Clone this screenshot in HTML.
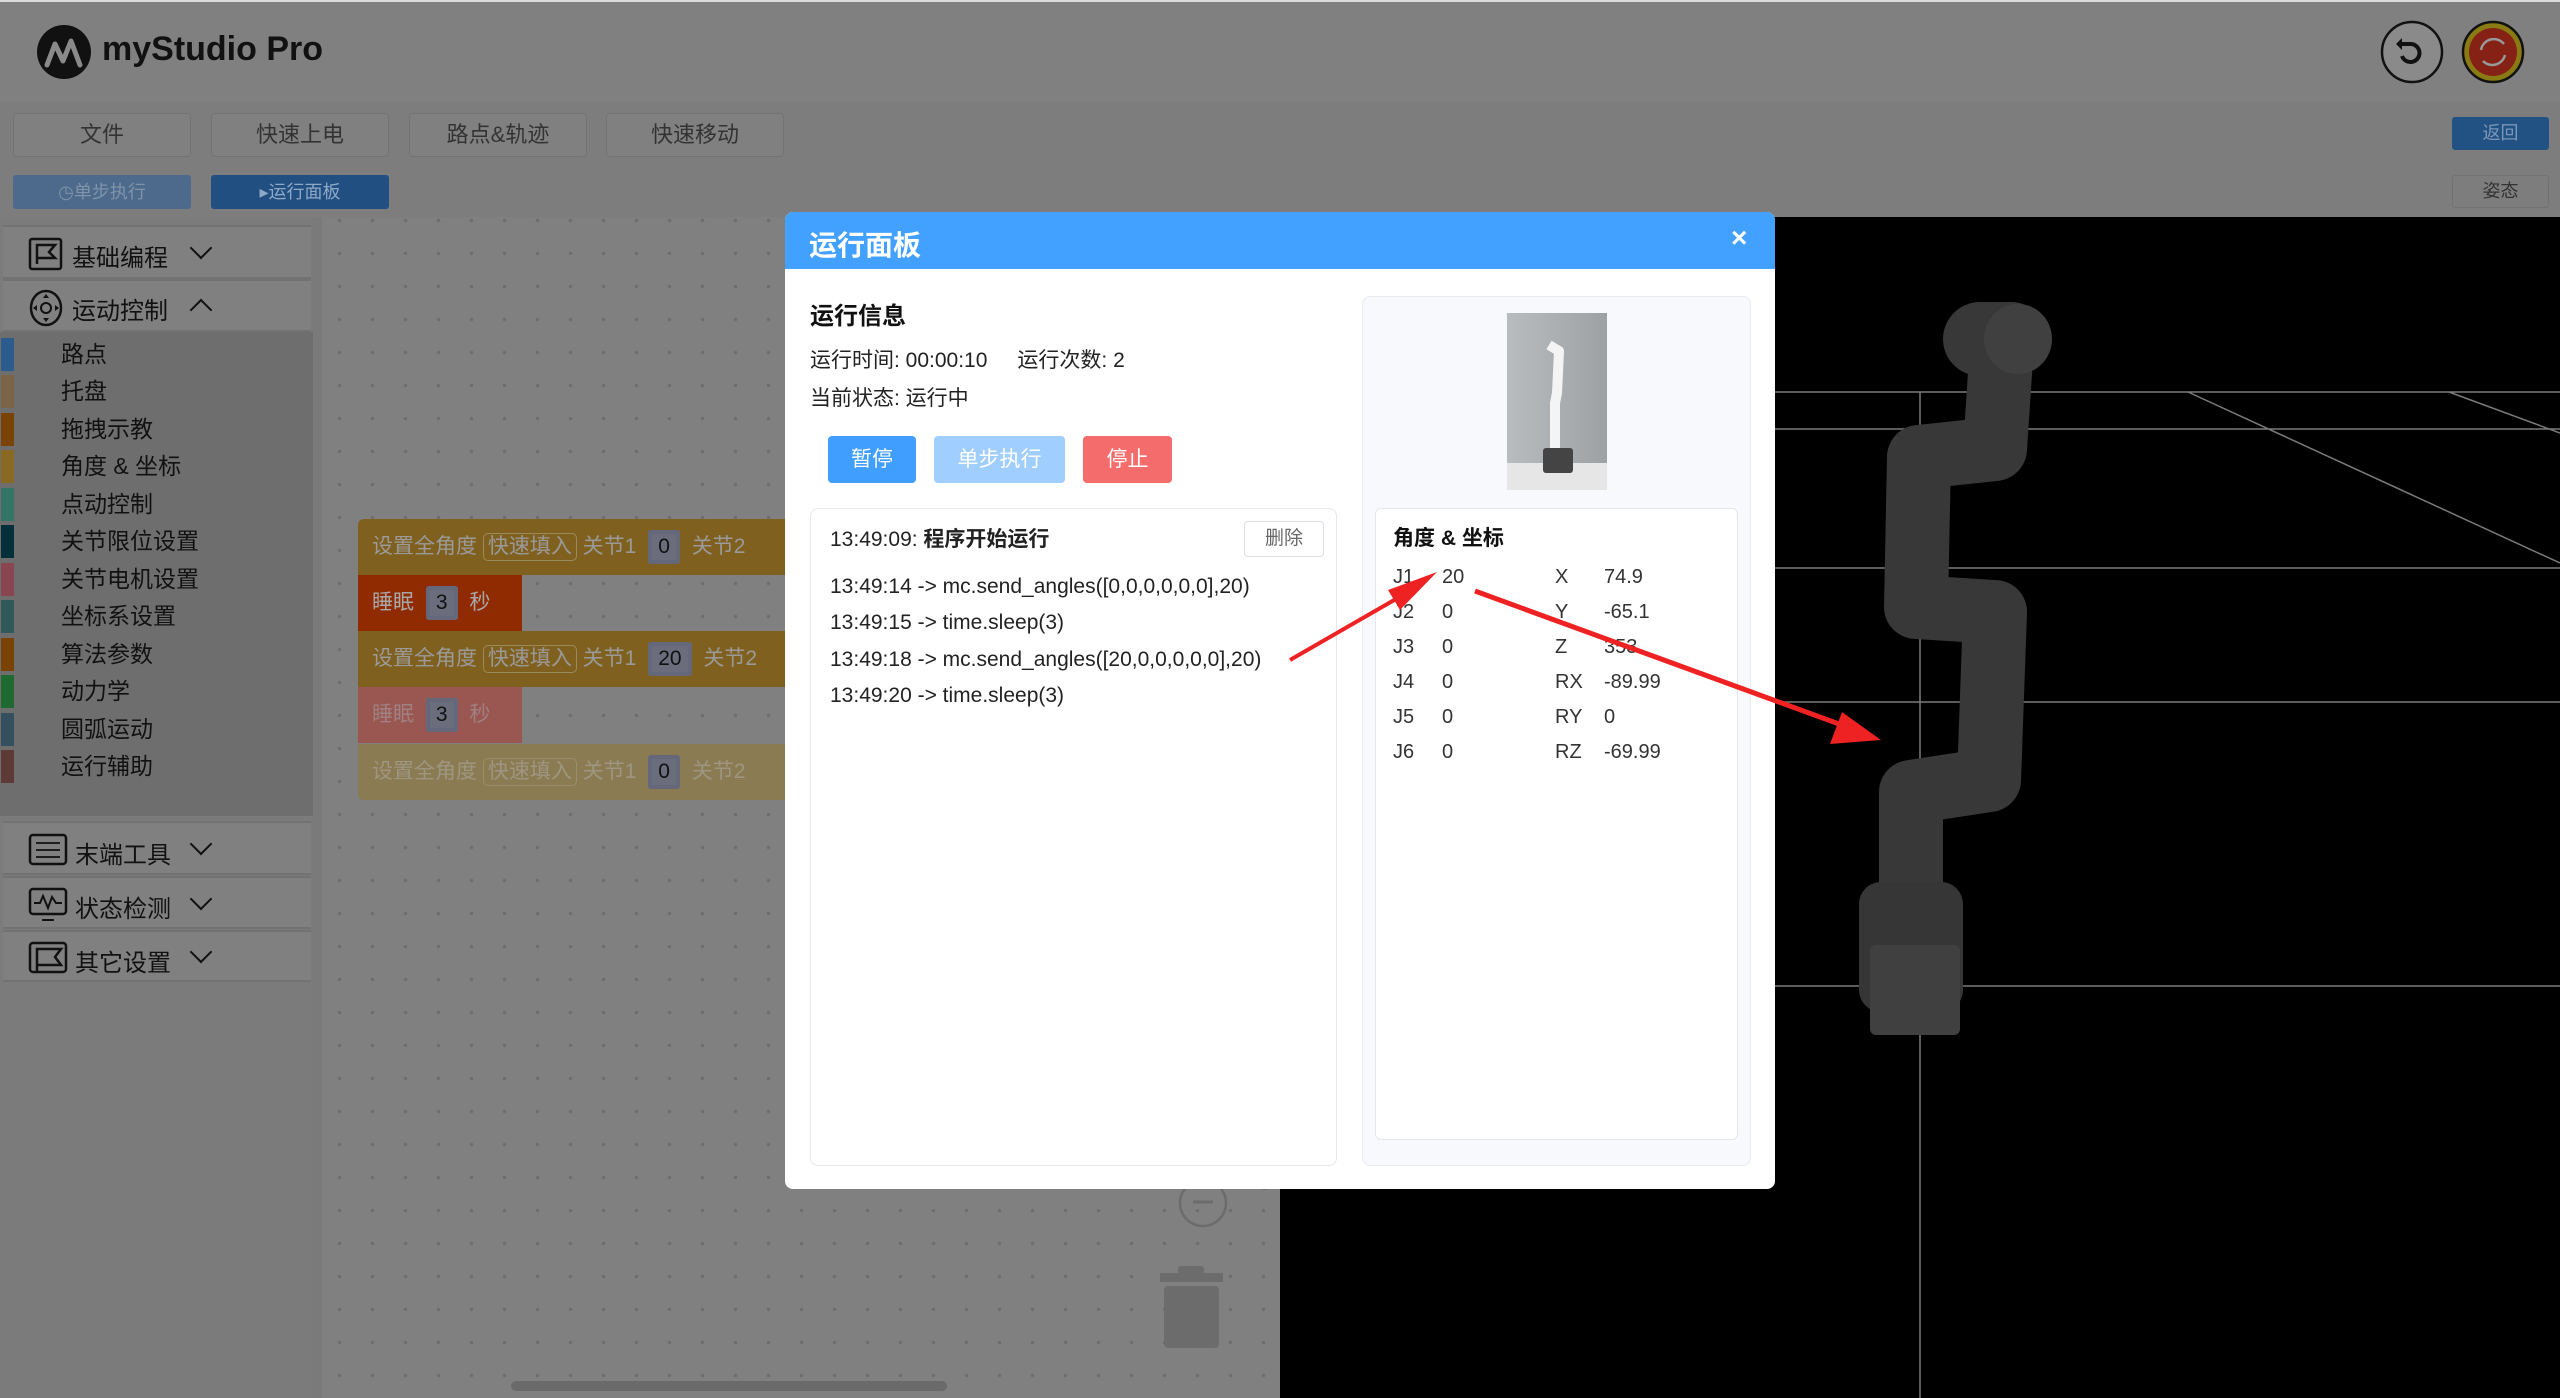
<!DOCTYPE html>
<html><head><meta charset="utf-8"><style>
*{margin:0;padding:0;box-sizing:border-box}
body{width:2560px;height:1398px;overflow:hidden;background:#808080;font-family:"Liberation Sans","Noto Sans CJK SC",sans-serif;position:relative}
.a{position:absolute}
.tb{position:absolute;border:1px solid #737373;border-radius:4px;background:#808080;color:#333;font-size:22px;text-align:center;line-height:42px;height:44px;width:178px;top:113px}
.cat{position:absolute;left:3px;width:308px;background:#808080;border-top:2px solid #727272;border-bottom:2px solid #727272;color:#111;font-size:24px}
.sub{position:absolute;left:0;width:313px;height:37px}
.sub i{position:absolute;left:1px;top:2px;width:13px;height:33px}
.sub span{position:absolute;left:61px;top:0;font-size:23px;color:#111;line-height:37px}
.blk{position:absolute;height:56px;font-size:21px;line-height:56px;padding-left:14px;white-space:nowrap;overflow:hidden}
.num{display:inline-block;background:#6b6d7d;color:#111;padding:0 10px;line-height:34px;border-radius:3px;margin:0 6px;box-shadow:inset 0 0 0 4px #65677a}
.log{position:absolute;left:830px;font-size:21px;color:#222}
.rv{position:absolute;font-size:20px;color:#333}
.chev{position:absolute;width:16px;height:16px;border-right:2.5px solid #111;border-bottom:2.5px solid #111;transform:rotate(45deg)}
</style></head><body>
<!-- header -->
<div class="a" style="left:0;top:0;width:2560px;height:103px;background:#808080"></div>
<div class="a" style="left:0;top:0;width:2560px;height:2px;background:#dcdcdc"></div>
<svg class="a" style="left:36px;top:24px" width="56" height="56" viewBox="0 0 56 56"><circle cx="28" cy="28" r="27" fill="#111"/><path d="M11 41 L19 20 L27 37 L35 17 L44 41" stroke="#8a8a8a" stroke-width="5" fill="none" stroke-linejoin="round" stroke-linecap="round"/></svg>
<div class="a" style="left:102px;top:30px;font-size:34px;font-weight:bold;color:#111">myStudio Pro</div>
<div class="a" style="left:0;top:103px;width:2560px;height:114px;background:#7d7d7d"></div>
<div class="tb" style="left:13px">文件</div>
<div class="tb" style="left:211px">快速上电</div>
<div class="tb" style="left:409px">路点&amp;轨迹</div>
<div class="tb" style="left:606px">快速移动</div>
<div class="a" style="left:13px;top:175px;width:178px;height:34px;background:#4d6a8c;border-radius:3px;color:#7f93aa;font-size:18px;text-align:center;line-height:34px">◷单步执行</div>
<div class="a" style="left:211px;top:175px;width:178px;height:34px;background:#214f82;border-radius:3px;color:#8ea8c6;font-size:18px;text-align:center;line-height:34px">▸运行面板</div>
<svg class="a" style="left:2378px;top:18px" width="150" height="70"><circle cx="34" cy="34" r="30" fill="#8a8a8a" stroke="#111" stroke-width="2.5"/><path d="M24 26 L33 26 A9 9 0 1 1 24 38" stroke="#111" stroke-width="4" fill="none"/><path d="M24 20 L24 32 L18 26Z" fill="#111"/><circle cx="115" cy="34" r="30" fill="#8a7a14" stroke="#111" stroke-width="2.5"/><circle cx="115" cy="34" r="24" fill="#852215"/><path d="M103 32 A13 13 0 0 1 126 26 M127 37 A13 13 0 0 1 105 43" stroke="#999" stroke-width="2.5" fill="none"/></svg>
<div class="a" style="left:2452px;top:117px;width:97px;height:33px;background:#215283;border-radius:3px;color:#7a97b8;font-size:18px;text-align:center;line-height:33px">返回</div>
<div class="a" style="left:2452px;top:175px;width:97px;height:33px;border:1px solid #727272;border-radius:3px;color:#333;font-size:18px;text-align:center;line-height:31px">姿态</div>
<!-- canvas -->
<div class="a" style="left:313px;top:217px;width:970px;height:1181px;background-color:#808080;background-image:radial-gradient(circle,#6e6e6e 1.5px,transparent 2px);background-size:33px 33px;background-position:10px 20px"></div>
<div class="a" style="left:313px;top:217px;width:9px;height:1181px;background:#7a7a7a"></div>
<!-- sidebar -->
<div class="a" style="left:0;top:217px;width:313px;height:1181px;background:#7b7b7b"></div>
<div class="cat" style="top:225px;height:54px"><svg class="a" style="left:25px;top:10px" width="36" height="34"><rect x="2" y="2" width="31" height="30" rx="2" fill="none" stroke="#111" stroke-width="2.5"/><path d="M9 27 V8 H27 L21 15 L27 21 H9" fill="none" stroke="#111" stroke-width="2.5"/></svg><span class="a" style="left:69px;top:11px">基础编程</span><div class="chev" style="left:190px;top:13px"></div></div>
<div class="cat" style="top:279px;height:53px"><svg class="a" style="left:25px;top:8px" width="36" height="38"><ellipse cx="18" cy="19" rx="15" ry="17" fill="none" stroke="#111" stroke-width="2.5"/><circle cx="18" cy="19" r="5" fill="none" stroke="#111" stroke-width="2"/><path d="M18 5 L15 9 H21Z M18 33 L15 29 H21Z M5 19 L9 16 V22Z M31 19 L27 16 V22Z" fill="#111"/></svg><span class="a" style="left:69px;top:10px">运动控制</span><div class="chev" style="left:190px;top:21px;transform:rotate(225deg)"></div></div>
<div class="a" style="left:0;top:332px;width:313px;height:484px;background:#6e6e6e"></div>
<div class="sub" style="top:336px"><i style="background:#2c5c8d"></i><span>路点</span></div>
<div class="sub" style="top:373px"><i style="background:#7b6546"></i><span>托盘</span></div>
<div class="sub" style="top:411px"><i style="background:#7a4304"></i><span>拖拽示教</span></div>
<div class="sub" style="top:448px"><i style="background:#8a6a23"></i><span>角度 &amp; 坐标</span></div>
<div class="sub" style="top:486px"><i style="background:#347568"></i><span>点动控制</span></div>
<div class="sub" style="top:523px"><i style="background:#04303c"></i><span>关节限位设置</span></div>
<div class="sub" style="top:561px"><i style="background:#8a4650"></i><span>关节电机设置</span></div>
<div class="sub" style="top:598px"><i style="background:#305a5a"></i><span>坐标系设置</span></div>
<div class="sub" style="top:636px"><i style="background:#7a4304"></i><span>算法参数</span></div>
<div class="sub" style="top:673px"><i style="background:#1e6a30"></i><span>动力学</span></div>
<div class="sub" style="top:711px"><i style="background:#34505e"></i><span>圆弧运动</span></div>
<div class="sub" style="top:748px"><i style="background:#5d3a36"></i><span>运行辅助</span></div>
<div class="cat" style="top:821px;height:54px"><svg class="a" style="left:25px;top:10px" width="40" height="34"><rect x="2" y="2" width="36" height="29" rx="3" fill="none" stroke="#111" stroke-width="2.5"/><path d="M8 10H32M8 17H32M8 24H32" stroke="#111" stroke-width="1.8"/></svg><span class="a" style="left:72px;top:12px">末端工具</span><div class="chev" style="left:190px;top:13px"></div></div>
<div class="cat" style="top:876px;height:53px"><svg class="a" style="left:25px;top:9px" width="40" height="36"><rect x="2" y="2" width="36" height="25" rx="3" fill="none" stroke="#111" stroke-width="2.5"/><path d="M6 16 L12 16 L15 9 L20 21 L24 10 L28 16 L34 16 M14 33H26" stroke="#111" stroke-width="2" fill="none"/></svg><span class="a" style="left:72px;top:11px">状态检测</span><div class="chev" style="left:190px;top:13px"></div></div>
<div class="cat" style="top:930px;height:52px"><svg class="a" style="left:25px;top:9px" width="40" height="34"><rect x="2" y="2" width="36" height="29" rx="3" fill="none" stroke="#111" stroke-width="2.5"/><path d="M9 30 V8 H33 L27 16 L33 24 H9" fill="none" stroke="#111" stroke-width="2.5"/></svg><span class="a" style="left:72px;top:11px">其它设置</span><div class="chev" style="left:190px;top:12px"></div></div>
<!-- blocks -->
<div class="blk" style="left:358px;top:519px;width:500px;background:#80601f;color:#9a9a9a;border-radius:6px 0 0 0">设置全角度 <span style="border:1px solid #9a8a5a;border-radius:5px;padding:0 4px;line-height:26px;display:inline-block">快速填入</span> 关节1 <span class="num">0</span> 关节2</div>
<div class="blk" style="left:358px;top:575px;width:164px;background:#902a00;color:#a8a8a8">睡眠 <span class="num">3</span> 秒</div>
<div class="blk" style="left:358px;top:631px;width:500px;background:#80601f;color:#9a9a9a">设置全角度 <span style="border:1px solid #9a8a5a;border-radius:5px;padding:0 4px;line-height:26px;display:inline-block">快速填入</span> 关节1 <span class="num">20</span> 关节2</div>
<div class="blk" style="left:358px;top:687px;width:164px;background:#9a5650;color:#a08080">睡眠 <span class="num">3</span> 秒</div>
<div class="blk" style="left:358px;top:744px;width:500px;background:#8a7b52;color:#9f9682;border-radius:0 0 0 6px">设置全角度 <span style="border:1px solid #9a8e6c;border-radius:5px;padding:0 4px;line-height:26px;display:inline-block">快速填入</span> 关节1 <span class="num">0</span> 关节2</div>
<!-- canvas controls -->
<svg class="a" style="left:1160px;top:1170px" width="110" height="180"><circle cx="43" cy="33" r="23" fill="none" stroke="#6c6c6c" stroke-width="2.5"/><path d="M33 32H53" stroke="#6c6c6c" stroke-width="3"/><rect x="100" y="0" width="10" height="20" rx="5" fill="#6a6a6a"/><rect x="0" y="103" width="63" height="9" fill="#6c6c6c"/><rect x="18" y="96" width="26" height="8" rx="3" fill="#6c6c6c"/><rect x="4" y="116" width="55" height="62" rx="4" fill="#6c6c6c"/></svg>
<div class="a" style="left:511px;top:1381px;width:436px;height:10px;border-radius:5px;background:#6a6a6a"></div>
<!-- 3D view -->
<svg class="a" style="left:1280px;top:217px" width="1280" height="1181" viewBox="1280 217 1280 1181">
<rect x="1280" y="217" width="1280" height="1181" fill="#000"/>
<g stroke="#7a7a7a" stroke-width="1.5" fill="none">
<path d="M1280 392H2560M1280 429H2560M1280 568H2560M1280 702H2560M1280 986H2560M1920 392V1398M2188 392L2560 563M2449 392L2560 433"/>
</g>
<polyline points="2002,343 1995,449 1919,457 1916,607 1995,612 1989,780 1911,792 1911,915" fill="none" stroke="#383838" stroke-width="64" stroke-linejoin="round" stroke-linecap="round"/>
<rect x="1943" y="302" width="105" height="74" rx="37" fill="#383838"/>
<ellipse cx="2018" cy="339" rx="34" ry="35" fill="#404040"/>
<rect x="1859" y="882" width="104" height="130" rx="22" fill="#363636"/>
<rect x="1870" y="945" width="90" height="90" rx="6" fill="#404040"/>
</svg>
<!-- modal -->
<div class="a" style="left:785px;top:212px;width:990px;height:977px;background:#fff;border-radius:8px;overflow:hidden">
<div class="a" style="left:0;top:0;width:990px;height:57px;background:#42a0ff"></div>
<div class="a" style="left:24px;top:12px;font-size:28px;font-weight:bold;color:#fff">运行面板</div>
<div class="a" style="left:946px;top:10px;font-size:28px;font-weight:bold;color:#fff">×</div>
</div>
<div class="a" style="left:810px;top:296px;font-size:24px;font-weight:bold;color:#111">运行信息</div>
<div class="a" style="left:810px;top:344px;font-size:21px;color:#222">运行时间: 00:00:10<span style="margin-left:30px">运行次数: 2</span></div>
<div class="a" style="left:810px;top:382px;font-size:21px;color:#222">当前状态: 运行中</div>
<div class="a" style="left:828px;top:436px;width:88px;height:47px;background:#409eff;border-radius:4px;color:#fff;font-size:21px;text-align:center;line-height:47px">暂停</div>
<div class="a" style="left:934px;top:436px;width:131px;height:47px;background:#a0cfff;border-radius:4px;color:#fff;font-size:21px;text-align:center;line-height:47px">单步执行</div>
<div class="a" style="left:1083px;top:436px;width:89px;height:47px;background:#f56c6c;border-radius:4px;color:#fff;font-size:21px;text-align:center;line-height:47px">停止</div>
<div class="a" style="left:810px;top:508px;width:527px;height:658px;border:1px solid #e4e7ed;border-radius:8px"></div>
<div class="log" style="top:523px">13:49:09:  <b>程序开始运行</b></div>
<div class="a" style="left:1244px;top:521px;width:80px;height:36px;border:1px solid #dcdfe6;border-radius:4px;color:#666;font-size:19px;text-align:center;line-height:34px">删除</div>
<div class="log" style="top:575px">13:49:14 -&gt; mc.send_angles([0,0,0,0,0,0],20)</div>
<div class="log" style="top:611px">13:49:15 -&gt; time.sleep(3)</div>
<div class="log" style="top:648px">13:49:18 -&gt; mc.send_angles([20,0,0,0,0,0],20)</div>
<div class="log" style="top:684px">13:49:20 -&gt; time.sleep(3)</div>
<div class="a" style="left:1362px;top:296px;width:389px;height:870px;background:#f7f9fc;border:1px solid #e8ebf0;border-radius:8px"></div>
<svg class="a" style="left:1507px;top:313px" width="100" height="177"><defs><linearGradient id="g" x1="0" x2="1"><stop offset="0" stop-color="#b9bcbf"/><stop offset="1" stop-color="#9ea1a4"/></linearGradient></defs><rect width="100" height="177" fill="url(#g)"/><rect y="150" width="100" height="27" fill="#e6e6e6"/><polyline points="42,32 52,38 50,80 48,90 48,140" fill="none" stroke="#f4f4f4" stroke-width="10" stroke-linejoin="round"/><rect x="36" y="135" width="30" height="25" rx="3" fill="#444"/></svg>
<div class="a" style="left:1375px;top:508px;width:363px;height:632px;background:#fff;border:1px solid #e4e7ed;border-radius:6px"></div>
<div class="a" style="left:1393px;top:522px;font-size:21px;font-weight:bold;color:#111">角度 &amp; 坐标</div>
<div class="rv" style="left:1393px;top:560px;line-height:35px">J1<br>J2<br>J3<br>J4<br>J5<br>J6</div>
<div class="rv" style="left:1442px;top:560px;line-height:35px">20<br>0<br>0<br>0<br>0<br>0</div>
<div class="rv" style="left:1555px;top:560px;line-height:35px">X<br>Y<br>Z<br>RX<br>RY<br>RZ</div>
<div class="rv" style="left:1604px;top:560px;line-height:35px">74.9<br>-65.1<br>353<br>-89.99<br>0<br>-69.99</div>
<!-- arrows -->
<svg class="a" style="left:0;top:0" width="2560" height="1398">
<path d="M1290 660 L1415 588" stroke="#ee2222" stroke-width="4"/><path d="M1437 572 L1400 610 L1388 590Z" fill="#ee2222"/>
<path d="M1475 591 L1850 728" stroke="#ee2222" stroke-width="5"/><path d="M1881 740 L1830 744 L1842 712Z" fill="#ee2222"/>
</svg>
</body></html>
